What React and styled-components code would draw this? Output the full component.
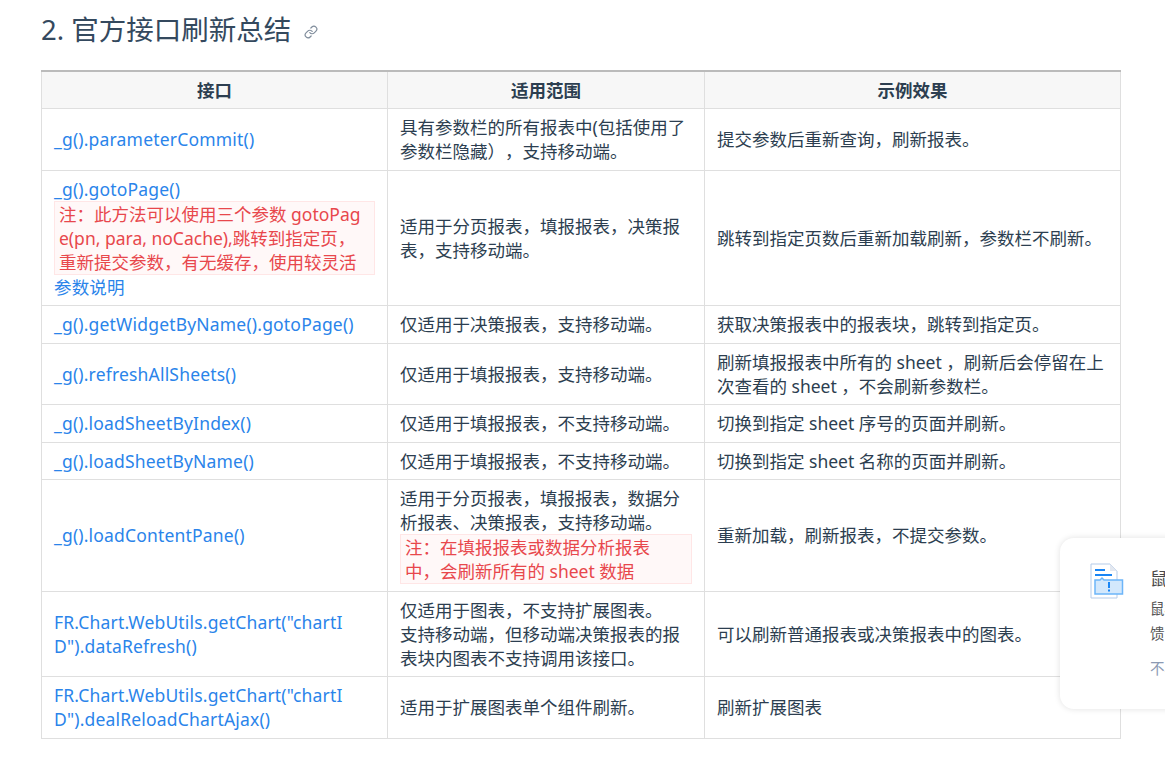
import React from 'react';
import styled, { createGlobalStyle } from 'styled-components';
import { Link as LinkIcon } from 'lucide-react';

const Global = createGlobalStyle`
  html, body { margin: 0; padding: 0; background: #fff; overflow: hidden; }
  body { font-family: "Noto Sans", "Noto Sans CJK SC", sans-serif; color: #2c3e50; }
`;
const Page = styled.div`
  position: relative;
  width: 1165px;
  height: 763px;
  overflow: hidden;
  padding: 0 45px 0 41px;
  box-sizing: border-box;
`;
const Heading = styled.h2`
  display: flex;
  align-items: center;
  margin: 0;
  padding-top: 1px;
  height: 59px;
  box-sizing: border-box;
  font-size: 27.5px;
  line-height: 38px;
  font-weight: 400;
  color: #34495e;
`;
const Anchor = styled.span`
  display: inline-flex;
  margin: 4px 0 0 13px;
  color: #7f8c9b;
`;
const Table = styled.table`
  margin-top: 11px;
  width: 1079px;
  table-layout: fixed;
  border-collapse: collapse;
  border-top: 2px solid #bbb;
  font-size: 17.5px;
  line-height: 24px;
  text-spacing-trim: space-all;
`;
const Th = styled.th`
  height: 37px;
  padding: 0 12.5px;
  box-sizing: border-box;
  background: #f7f7f7;
  border: 1px solid #dfdfdf;
  border-top: 0;
  font-weight: 700;
  font-size: 17.5px;
  color: #2c3e50;
  text-align: center;
`;
const Row = styled.tr`
  height: ${(p) => p.$h}px;
`;
const Td = styled.td`
  padding: 6.4px 12px 5.6px;
  border: 1px solid #dfdfdf;
  word-break: break-all;
  vertical-align: middle;
`;
const Api = styled.a`
  color: #2a84ea;
  text-decoration: none;
  letter-spacing: 0.18px;
`;
const Note = styled.div`
  padding: 0 8px 0 4px;
  background: #fff8f8;
  border: 1px solid #ffe6e6;
  color: #e8474c;
`;
const Toast = styled.aside`
  position: absolute;
  left: 1060px;
  top: 538px;
  width: 300px;
  height: 171px;
  display: flex;
  gap: 24px;
  padding: 25px 0 0 30px;
  box-sizing: border-box;
  background: #fff;
  border-radius: 14px;
  box-shadow: 0 0 6px rgba(0, 0, 0, 0.12);
  color: #555;
`;
const ToastBody = styled.div`
  font-size: 14.5px;
  line-height: 25px;
`;
const ToastTitle = styled.div`
  font-size: 17.5px;
  line-height: 30px;
  color: #4a4a4a;
  margin-bottom: 3px;
`;
const ToastMuted = styled.div`
  margin-top: 10px;
  color: #8c9ab3;
`;

const rows = [
  { h: 62, a: <Api>_g().parameterCommit()</Api>, b: '具有参数栏的所有报表中(包括使用了参数栏隐藏），支持移动端。', c: '提交参数后重新查询，刷新报表。' },
  {
    h: 135,
    a: (
      <>
        <Api>_g().gotoPage()</Api>
        <Note>注：此方法可以使用三个参数 gotoPage(pn, para, noCache),跳转到指定页，重新提交参数，有无缓存，使用较灵活</Note>
        <Api>参数说明</Api>
      </>
    ),
    b: '适用于分页报表，填报报表，决策报表，支持移动端。',
    c: '跳转到指定页数后重新加载刷新，参数栏不刷新。',
  },
  { h: 38, a: <Api>_g().getWidgetByName().gotoPage()</Api>, b: '仅适用于决策报表，支持移动端。', c: '获取决策报表中的报表块，跳转到指定页。' },
  { h: 61, a: <Api>_g().refreshAllSheets()</Api>, b: '仅适用于填报报表，支持移动端。', c: '刷新填报报表中所有的 sheet ，刷新后会停留在上次查看的 sheet ，不会刷新参数栏。' },
  { h: 38, a: <Api>_g().loadSheetByIndex()</Api>, b: '仅适用于填报报表，不支持移动端。', c: '切换到指定 sheet 序号的页面并刷新。' },
  { h: 37, a: <Api>_g().loadSheetByName()</Api>, b: '仅适用于填报报表，不支持移动端。', c: '切换到指定 sheet 名称的页面并刷新。' },
  {
    h: 112,
    a: <Api>_g().loadContentPane()</Api>,
    b: (
      <>
        适用于分页报表，填报报表，数据分析报表、决策报表，支持移动端。
        <Note>注：在填报报表或数据分析报表中，会刷新所有的 sheet 数据</Note>
      </>
    ),
    c: '重新加载，刷新报表，不提交参数。',
  },
  {
    h: 85,
    a: <Api>FR.Chart.WebUtils.getChart("chartI<br />D").dataRefresh()</Api>,
    b: (
      <>
        仅适用于图表，不支持扩展图表。
        <br />
        支持移动端，但移动端决策报表的报表块内图表不支持调用该接口。
      </>
    ),
    c: '可以刷新普通报表或决策报表中的图表。',
  },
  { h: 62, a: <Api>FR.Chart.WebUtils.getChart("chartI<br />D").dealReloadChartAjax()</Api>, b: '适用于扩展图表单个组件刷新。', c: '刷新扩展图表' },
];

const FileIcon = () => (
  <svg width="36" height="36" viewBox="0 0 36 36" fill="none">
    <path d="M1 1h19l7 7v27H1z" fill="#fff" stroke="#b5cbe8" />
    <path d="M20 1v7h7z" fill="#e3e8f0" />
    <rect x="5" y="6" width="10" height="2" fill="#1a86f5" />
    <rect x="5" y="11" width="17" height="2" fill="#1a86f5" />
    <path d="M5 17h5l2 -2 2 2h18.500v14H5z" fill="#d3e8fc" stroke="#6cb5f9" strokeWidth="1.500" />
    <rect x="18" y="19" width="2" height="6" fill="#1a86f5" />
    <rect x="18" y="26.500" width="2" height="2" fill="#1a86f5" />
  </svg>
);

export default function App() {
  return (
    <Page>
      <Global />
      <Heading>
        2. 官方接口刷新总结
        <Anchor><LinkIcon size={14} /></Anchor>
      </Heading>
      <Table>
        <colgroup>
          <col style={{ width: 346 }} />
          <col style={{ width: 317 }} />
          <col style={{ width: 416 }} />
        </colgroup>
        <thead>
          <tr>
            <Th>接口</Th>
            <Th>适用范围</Th>
            <Th>示例效果</Th>
          </tr>
        </thead>
        <tbody>
          {rows.map((r, i) => (
            <Row key={i} $h={r.h}>
              <Td>{r.a}</Td>
              <Td>{r.b}</Td>
              <Td>{r.c}</Td>
            </Row>
          ))}
        </tbody>
      </Table>
      <Toast>
        <FileIcon />
        <ToastBody>
          <ToastTitle>鼠标悬停提示</ToastTitle>
          <div>鼠标悬停在文档上可以反</div>
          <div>馈问题给我们</div>
          <ToastMuted>不再提示</ToastMuted>
        </ToastBody>
      </Toast>
    </Page>
  );
}
